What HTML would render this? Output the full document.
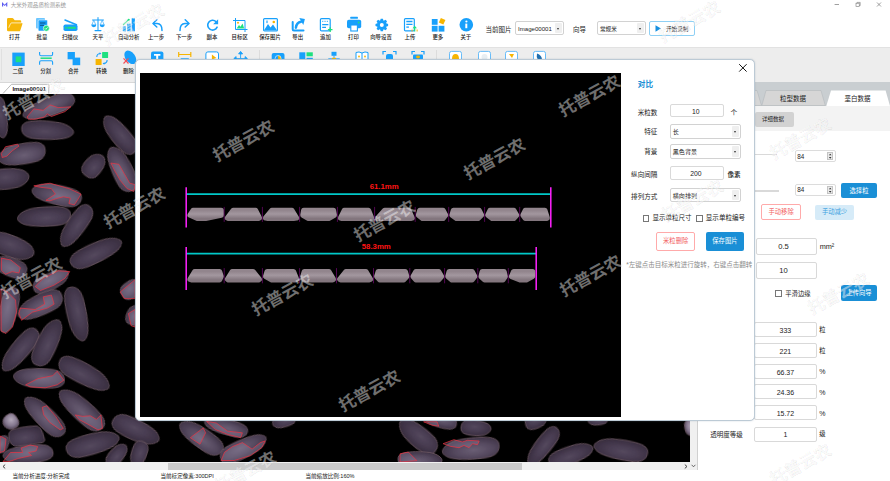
<!DOCTYPE html>
<html lang="zh"><head><meta charset="utf-8"><title>大米外观品质检测系统</title><style>
*{box-sizing:border-box;margin:0;padding:0}
html,body{width:890px;height:481px;overflow:hidden;background:#fff}
body{font-family:"Liberation Sans","Noto Sans CJK SC",sans-serif;color:#222;position:relative;font-size:6.6px;line-height:1}
.abs{position:absolute}
.lbl{position:absolute;white-space:nowrap;transform:translate(-50%,calc(-50% + 1px));font-size:5.4px;color:#222;font-weight:500}
.t{position:absolute;white-space:nowrap;transform:translateY(calc(-50% + 1px))}
.tc{position:absolute;white-space:nowrap;transform:translate(-50%,calc(-50% + 1px))}
.tr{position:absolute;white-space:nowrap;transform:translate(-100%,calc(-50% + 1px))}
.inp{position:absolute;border:1px solid #d9d9d9;border-radius:2px;background:#fff}
.combo{position:absolute;border:1px solid #d2d2d2;border-radius:2px;background:#fff}
.combo i{position:absolute;right:1px;top:1px;bottom:1px;width:7px;background:#efefef;border-radius:1px}
.combo i:after{content:"";position:absolute;left:2px;top:50%;margin-top:-0.5px;border:1.5px solid transparent;border-top:2px solid #333}
.btn{position:absolute;border-radius:2px;display:flex;align-items:center;justify-content:center;white-space:nowrap}
.cb{position:absolute;width:6.500px;height:6.500px;border:.75px solid #777;background:#fff}
.wm{position:absolute;white-space:nowrap;transform:translate(-50%,-50%) rotate(-28.500deg);font-weight:700;font-size:16.700px;line-height:1;color:rgba(255,255,255,.44);-webkit-text-stroke:.3px rgba(60,60,60,.15);text-shadow:.4px .4px 0 rgba(0,0,0,.05)}
svg{position:absolute;overflow:visible}
</style></head><body>
<div class="abs" style="left:0;top:0;width:890px;height:47px;background:#fff"></div>
<svg style="left:2px;top:2.400px" width="5.300" height="4.600" viewBox="0 0 12 10"><path d="M0 10V0l6 6 6-6v10h-2.6V5.6L6 9 2.600 5.600V10z" fill="#5b5bf0"/></svg>
<div class="t" style="left:10.700px;top:5px;font-size:5.550px;color:#9a9a9a">大米外观品质检测系统</div>
<svg style="left:834px;top:1px" width="50" height="8" viewBox="0 0 50 8"><path d="M.600 3.500h4.400" stroke="#777" stroke-width=".7" fill="none"/><rect x="22" y="2.200" width="3.200" height="3.200" fill="none" stroke="#777" stroke-width=".6"/><path d="M23 2.200v-.8h3.200v3.200h-1" fill="none" stroke="#777" stroke-width=".6"/><path d="M43 1.500l4 4m0-4l-4 4" stroke="#777" stroke-width=".7" fill="none"/></svg>
<svg style="left:0;top:0" width="890" height="94" viewBox="0 0 890 94"><g transform="translate(7 18.1)"><path d="M0 1.300Q0 0 1.300 0H5.300Q6 0 6.500.600L7.700 2.200H13Q14.200 2.200 14.200 3.400V4.800H14.800Q15.800 4.800 15.400 5.900L13.300 12.300Q13 13.200 12 13.200H1.300Q0 13.200 0 11.900z" fill="#f6b70a"/><path d="M1.900 9.200L3.500 5.600Q3.900 4.800 4.700 4.800H14.200" stroke="#fff" stroke-width=".7" fill="none" stroke-linecap="round"/></g><g transform="translate(36 18)"><rect x="0" y="0" width="9" height="10.500" rx="1" fill="#6cc6ff"/><rect x="2.200" y="2" width="9.300" height="11" rx="1" fill="#18a0fb" stroke="#fff" stroke-width=".5"/><path d="M4 5h5.500M4 7.300h4" stroke="#0b4f86" stroke-width="1"/><circle cx="10.300" cy="10.300" r="3" fill="#1ee07f" stroke="#fff" stroke-width=".6"/><path d="M8.900 10.300l1 1 1.700-1.900" stroke="#fff" stroke-width=".8" fill="none"/></g><g transform="translate(63.5 19)"><path d="M1.500 1L13 5.800" stroke="#18a0fb" stroke-width="1.500" stroke-linecap="round"/><rect x="0" y="5.500" width="14" height="6.500" rx="1.800" fill="#18a0fb"/><rect x="4" y="7.800" width="8.300" height="2" rx=".6" fill="#1ee07f"/><rect x="1.700" y="7.800" width="1.500" height="2" rx=".5" fill="#1ee07f"/></g><g transform="translate(91 17)"><path d="M7 .6V13M4 13.600H10M1.500 2.900H12.500" stroke="#18a0fb" stroke-width="1.050" stroke-linecap="round" fill="none"/><path d="M2.800 3.200L.8 8H4.800zM11.200 3.200L9.200 8H13.200z" stroke="#18a0fb" stroke-width=".6" fill="none"/><path d="M.3 7.800H5.300Q5.300 10.200 2.800 10.200Q.3 10.200 .3 7.800zM8.700 7.800H13.700Q13.700 10.200 11.200 10.200Q8.700 10.200 8.700 7.800z" fill="#18a0fb"/></g><g transform="translate(123 18.5)"><rect x="-.2" y="7.900" width="3.100" height="4.900" fill="#18a0fb"/><rect x="4.200" y="5.200" width="3.500" height="7.600" fill="#18a0fb"/><rect x="8.700" y="-.2" width="3.200" height="13" fill="#18a0fb"/><path d="M.4 6L5.600 1.400" stroke="#1ee07f" stroke-width="1.200" stroke-linecap="round"/><circle cx="5.700" cy="1.300" r="1.100" fill="#1ee07f"/></g><g transform="translate(152 19)"><path d="M4.800 .8L1 4.500L4.800 8" stroke="#18a0fb" stroke-width="1.500" fill="none" stroke-linecap="round" stroke-linejoin="round"/><path d="M1.500 4.500H5Q10 4.500 10 11.500" stroke="#18a0fb" stroke-width="1.500" fill="none" stroke-linecap="round"/></g><g transform="translate(179 19)"><path d="M6.200 .8L10 4.500L6.200 8" stroke="#18a0fb" stroke-width="1.500" fill="none" stroke-linecap="round" stroke-linejoin="round"/><path d="M9.500 4.500H6Q1 4.500 1 11.500" stroke="#18a0fb" stroke-width="1.500" fill="none" stroke-linecap="round"/></g><g transform="translate(206.8 19)"><path d="M10.300 8.200A4.900 4.900 0 1 1 9.200 2.600" stroke="#18a0fb" stroke-width="1.600" fill="none" stroke-linecap="round"/><path d="M11.300 .2V5.200H6.300z" fill="#18a0fb"/></g><g transform="translate(233 18)"><path d="M2.500 0V11.500H14.500M0 2.500H12V14" stroke="#18a0fb" stroke-width="1" fill="none"/><path d="M3.600 10.500L6 7L7.500 8.700L9.500 5.500L11.200 10.500z" fill="#1ee07f"/><circle cx="5" cy="4.800" r="1" fill="#f7b500"/></g><g transform="translate(263 18)"><rect x=".6" y=".6" width="13.800" height="12.300" rx="1" fill="#fff" stroke="#18a0fb" stroke-width="1.200"/><path d="M1.200 12L5 6L7.500 9.500L10 6.500L13.800 12z" fill="#18a0fb"/><circle cx="10.800" cy="4" r="1.300" fill="#f7b500"/><path d="M4 2.200v3M3 4h2" stroke="#18a0fb" stroke-width=".7"/></g><g transform="translate(291.7 18.5)"><path d="M1 3.500V10.800Q1 12 2.200 12H11.800" stroke="#18a0fb" stroke-width="2" fill="none" stroke-linecap="round"/><path d="M4.200 9.200Q4.800 4 9.300 3.300" stroke="#18a0fb" stroke-width="2.500" fill="none" stroke-linecap="round"/><path d="M7.600 -.4L13.200 .5L11.600 6.500z" fill="#18a0fb"/></g><g transform="translate(319.8 18)"><rect x=".6" y=".6" width="9.800" height="12.300" rx="1.200" fill="#fff" stroke="#18a0fb" stroke-width="1.200"/><path d="M2.400 3.300h1.100M4.700 3.300h1.100M7 3.300h1.100" stroke="#18a0fb" stroke-width="1"/><path d="M2.400 6.500h6.200M2.400 9.300h3.800" stroke="#18a0fb" stroke-width="1.250"/><path d="M10.400 9.300v4.600M8.100 11.600h4.600" stroke="#1ee07f" stroke-width="1.300"/></g><g transform="translate(347 16.7)"><rect x="3.300" y="0" width="7.600" height="2" rx=".5" fill="#18a0fb"/><rect x="0" y="3" width="14.200" height="8.500" rx="1.800" fill="#18a0fb"/><rect x="3.800" y="8.300" width="6.600" height="6" fill="#fff" stroke="#18a0fb" stroke-width="1.100"/><circle cx="11.700" cy="5.800" r=".9" fill="#1ee07f"/></g><g transform="translate(375.6 18.5)"><path d="M12.51 5.42L12.51 7.58L10.60 8.16L10.48 8.44L11.43 10.19L9.89 11.73L8.14 10.78L7.86 10.90L7.28 12.81L5.12 12.81L4.54 10.90L4.26 10.78L2.51 11.73L0.97 10.19L1.92 8.44L1.80 8.16L-0.11 7.58L-0.11 5.42L1.80 4.84L1.92 4.56L0.97 2.81L2.51 1.27L4.26 2.22L4.54 2.10L5.12 0.19L7.28 0.19L7.86 2.10L8.14 2.22L9.89 1.27L11.43 2.81L10.48 4.56L10.60 4.84z" fill="#18a0fb"/><circle cx="6.200" cy="6.500" r="2" fill="#fff"/></g><g transform="translate(403.9 18)"><rect x=".6" y=".6" width="9.800" height="12.300" rx="1" fill="#fff" stroke="#18a0fb" stroke-width="1.200"/><path d="M2.400 3.500h6.200M2.400 6.300h6.200" stroke="#18a0fb" stroke-width="1.300"/><path d="M2.400 9.100h2.600" stroke="#18a0fb" stroke-width="1.300"/><path d="M10.800 13.500V9" stroke="#1ee07f" stroke-width="1.200"/><path d="M8.600 10.300L10.800 7.800L13 10.300z" fill="#1ee07f"/><path d="M8.200 13.500V11.500" stroke="#f7b500" stroke-width="1"/><path d="M13.200 13.500V11.500" stroke="#f7b500" stroke-width="1"/></g><g transform="translate(431.8 18)"><rect x="0" y="1" width="5.800" height="5.800" fill="#18a0fb"/><rect x="0" y="7.800" width="5.800" height="5.800" fill="#18a0fb"/><rect x="6.800" y="7.800" width="5.800" height="5.800" fill="#18a0fb"/><rect x="7.800" y=".8" width="5" height="5" fill="#f7b500" transform="rotate(25 10.300 3.300)"/></g><g transform="translate(459.5 17.9)"><circle cx="6.800" cy="6.900" r="6.800" fill="#18a0fb"/><circle cx="6.900" cy="3.600" r="1.100" fill="#fff"/><path d="M5.800 5.700H7.800V10.300H5.800z" fill="#fff"/></g></svg>
<div class="lbl" style="left:14.5px;top:37.300px">打开</div>
<div class="lbl" style="left:42.0px;top:37.300px">批量</div>
<div class="lbl" style="left:70.0px;top:37.300px">扫描仪</div>
<div class="lbl" style="left:98.0px;top:37.300px">天平</div>
<div class="lbl" style="left:128.7px;top:37.300px">自动分析</div>
<div class="lbl" style="left:156.0px;top:37.300px">上一步</div>
<div class="lbl" style="left:184.0px;top:37.300px">下一步</div>
<div class="lbl" style="left:212.0px;top:37.300px">副本</div>
<div class="lbl" style="left:239.7px;top:37.300px">目标区</div>
<div class="lbl" style="left:270.0px;top:37.300px">保存图片</div>
<div class="lbl" style="left:297.7px;top:37.300px">导出</div>
<div class="lbl" style="left:325.4px;top:37.300px">追加</div>
<div class="lbl" style="left:353.5px;top:37.300px">打印</div>
<div class="lbl" style="left:381.0px;top:37.300px">向导设置</div>
<div class="lbl" style="left:410.0px;top:37.300px">上传</div>
<div class="lbl" style="left:437.8px;top:37.300px">更多</div>
<div class="lbl" style="left:465.8px;top:37.300px">关于</div>
<div class="t" style="left:485.500px;top:28.800px;font-size:6.500px">当前图片</div>
<div class="combo" style="left:515px;top:21.300px;width:49px;height:14.200px"><i></i></div>
<div class="t" style="left:518px;top:27.800px;font-size:6.100px">Image00001</div>
<div class="t" style="left:573px;top:28.800px;font-size:6.500px">向导</div>
<div class="combo" style="left:597px;top:21.300px;width:48.500px;height:14.200px"><i></i></div>
<div class="t" style="left:600px;top:28.600px;font-size:5.600px">常规米</div>
<div class="btn" style="left:649.300px;top:21.200px;width:45.500px;height:14.600px;border:1px solid #8fd0f5;background:#fff"></div>
<svg style="left:655px;top:25px" width="7" height="7" viewBox="0 0 7 7"><path d="M.5.300L6 3.500.5 6.700z" fill="#1890e0"/></svg>
<div class="t" style="left:666px;top:28.600px;font-size:5.600px">开始录制</div>
<div class="abs" style="left:0;top:47px;width:890px;height:34.700px;background:#ededed"></div>
<div class="abs" style="left:0;top:46.500px;width:890px;height:1px;background:#e2e2e2"></div>
<div class="abs" style="left:1px;top:49px;width:1px;height:31px;background:#e0e0e0"></div>
<svg style="left:0;top:0" width="890" height="94" viewBox="0 0 890 94"><g transform="translate(12.3 52.6)"><rect width="12.400" height="13.400" fill="#18a0fb"/><rect x="3.400" y="3.800" width="5.600" height="5.800" fill="#1ee07f"/></g><g transform="translate(39 52)"><path d="M.6 0V2.200Q.6 3.700 2 3.700H12.200Q13.600 3.700 13.600 2.200V0M.6 12.800V10.200Q.6 8.700 2 8.700H12.200Q13.600 8.700 13.600 10.200V12.800" stroke="#18a0fb" stroke-width="1.100" fill="none"/><path d="M1.500 6.200H12.700" stroke="#1ee07f" stroke-width="1.500"/></g><g transform="translate(67.6 52)"><rect x="0" y="0" width="7.300" height="7.300" fill="#18a0fb"/><rect x="5" y="5.600" width="7.600" height="7.600" fill="#18a0fb"/></g><g transform="translate(95.6 52)"><rect x="6.500" y="0" width="6" height="6" rx=".6" fill="#1ee07f"/><rect x="0" y="7" width="6" height="6" rx=".6" fill="#f7b500"/><path d="M1.200 5Q1.200 1.800 4.500 1.500" stroke="#18a0fb" stroke-width="1.100" fill="none"/><path d="M11.500 8Q11.500 11.200 8.200 11.500" stroke="#18a0fb" stroke-width="1.100" fill="none"/><path d="M4 .3L5.800 1.500L4 2.800zM8.800 10.200L7 11.500L8.800 12.800z" fill="#18a0fb"/></g><g transform="translate(122.7 51)"><ellipse cx="7.600" cy="6.300" rx="4.900" ry="7.600" transform="rotate(-36 7.600 6.300)" fill="#18a0fb"/><path d="M.8 7.300L5.800 12.500M5.800 7.300L.8 12.500" stroke="#f2505a" stroke-width="1.200"/></g><g transform="translate(151 51.4)"><rect x="0" y="0" width="12.400" height="12" rx="2" fill="#18a0fb"/><path d="M3 2.500H9.400V4.300H7.200V9.500H5.200V4.300H3z" fill="#fff"/></g><g transform="translate(178.2 52)"><path d="M.5 0V5M12.600 0V5M.5 2.500H12.600" stroke="#f7b500" stroke-width="1.200" fill="none"/><path d="M2.500 7H10.600" stroke="#18a0fb" stroke-width="1.500"/></g><g transform="translate(205.4 51.4)"><rect x=".5" y=".5" width="12.600" height="12" rx="2" fill="#fff" stroke="#18a0fb" stroke-width="1"/><path d="M6.500 3L11 6.500L6.500 8z" fill="#f7b500"/></g><g transform="translate(233.8 51.4)"><path d="M6.800 0L4.800 2.500H8.800zM6.800 2V7M0 7.200L2.300 5.200V9.200zM13.600 7.200L11.300 5.200V9.200zM2 7.200H11.600" fill="#18a0fb" stroke="#18a0fb" stroke-width=".9"/></g><g transform="translate(271.7 53)"><rect x="0" y="0" width="12.800" height="11" rx="2" fill="#18a0fb"/><path d="M6.400 2.500A3 3 0 0 1 6.400 8.500z" fill="#f7b500"/><circle cx="6.400" cy="5.500" r="3" fill="none" stroke="#fff" stroke-width=".6"/></g><g transform="translate(299.3 52.3)"><rect x="0" y="0" width="6" height="12" fill="#18a0fb"/><rect x="7.200" y="0" width="6.300" height="4" fill="#1ee07f"/><rect x="7.200" y="5.500" width="6.300" height="6" fill="#18a0fb"/></g><g transform="translate(328.5 51.8)"><rect x="3" y="0" width="5" height="4" fill="#18a0fb"/><path d="M5.500 4V7M0 9V7H11V9" stroke="#18a0fb" stroke-width=".9" fill="none"/><rect x="3.500" y="6" width="4" height="2" fill="#f7b500"/></g><g transform="translate(355.5 51.5)"><path d="M6.500 1.500Q3.500 -.3 .5 1V11Q3.500 10 6.500 11.500Q9.500 10 12.500 11V1Q9.500 -.3 6.500 1.500zM6.500 1.500V11.500" fill="#fff" stroke="#18a0fb" stroke-width="1"/><circle cx="3.500" cy="5" r=".9" fill="#f7b500"/><circle cx="9.500" cy="5" r=".9" fill="#f7b500"/></g><g transform="translate(383 51.5)"><path d="M0 3V0H3M10 0H13V3M0 9V12M13 9V12" stroke="#18a0fb" stroke-width="1.200" fill="none"/><rect x="3" y="2.500" width="7" height="7" rx="2" fill="#18a0fb"/></g><g transform="translate(412 51.5)"><path d="M0 3V0H3M9 0H12V3" stroke="#18a0fb" stroke-width="1.200" fill="none"/><rect x="1" y="3" width="10" height="5" rx="1" fill="#18a0fb"/><ellipse cx="6" cy="5.500" rx="2" ry="1.400" fill="#f7b500"/></g><g transform="translate(449 50.9)"><rect x=".5" y=".5" width="12" height="12" rx="2" fill="#fff" stroke="#58b6f8" stroke-width=".9"/><g fill="#18a0fb"/><path d="M3 8Q3 3 6.500 3Q10 3 10 8z" fill="#f7b500"/></g><g transform="translate(478 50.9)"><rect x=".5" y=".5" width="12" height="12" rx="2" fill="#fff" stroke="#58b6f8" stroke-width=".9"/><g fill="#18a0fb"/><circle cx="6.500" cy="6" r="3" fill="#e8eef2"/></g><g transform="translate(505 50.9)"><rect x=".5" y=".5" width="12" height="12" rx="2" fill="#fff" stroke="#58b6f8" stroke-width=".9"/><g fill="#18a0fb"/><path d="M4 3H9L7 7z" fill="#f7b500"/></g><g transform="translate(533 50.9)"><rect x=".5" y=".5" width="12" height="12" rx="2" fill="#fff" stroke="#58b6f8" stroke-width=".9"/><g fill="#18a0fb"/><path d="M4 2.500Q9 4 9 9H5Q3 6 4 2.500z" fill="#1f6fb0"/></g></svg>
<div class="lbl" style="left:17.8px;top:71px">二值</div>
<div class="lbl" style="left:45.6px;top:71px">分割</div>
<div class="lbl" style="left:73.3px;top:71px">合并</div>
<div class="lbl" style="left:101.5px;top:71px">转换</div>
<div class="lbl" style="left:128.5px;top:71px">删除</div>
<div class="abs" style="left:258.500px;top:50px;width:1px;height:30px;background:#dcdcdc"></div>
<div class="abs" style="left:435.500px;top:50px;width:1px;height:30px;background:#dcdcdc"></div>
<div class="abs" style="left:0;top:81.700px;width:697px;height:12.300px;background:#fff;border-top:1px solid #d8d8d8"></div>
<svg style="left:0;top:82px" width="60" height="12" viewBox="0 0 60 12"><path d="M3 11.500L11.500 2.300H48.800V11.500" fill="#fff" stroke="#9a9a9a" stroke-width=".7"/></svg>
<div class="t" style="left:12.400px;top:88.700px;font-size:5.950px;font-weight:bold;color:#111">Image00001</div>
<div class="abs" style="left:0;top:94px;width:690px;height:368px;background:#000;overflow:hidden"><svg style="left:0;top:0" width="690" height="368" viewBox="0 94 690 368"><defs><radialGradient id="gd" cx=".45" cy=".42" r=".6"><stop offset="0" stop-color="#54485d"/><stop offset=".5" stop-color="#473b50"/><stop offset=".85" stop-color="#3c3143"/><stop offset="1" stop-color="#352a3b"/></radialGradient><radialGradient id="gg" cx=".45" cy=".42" r=".6"><stop offset="0" stop-color="#6a5e74"/><stop offset=".5" stop-color="#574b61"/><stop offset=".85" stop-color="#45394d"/><stop offset="1" stop-color="#3a2f40"/></radialGradient><radialGradient id="gl" cx=".4" cy=".4" r=".65"><stop offset="0" stop-color="#b4a9ba"/><stop offset=".6" stop-color="#85788f"/><stop offset="1" stop-color="#4d4154"/></radialGradient><filter id="bl" x="-10%" y="-10%" width="120%" height="120%"><feGaussianBlur stdDeviation=".45"/></filter></defs><g transform="translate(0 117) rotate(82) scale(1 1)"><path d="M-21.00 1.05C-21.00 -3.15 -18.48 -5.95 -11.55 -6.72C-2.10 -7.42 9.45 -6.86 15.75 -4.90C18.90 -3.64 21.00 -2.10 21.00 -0.35C21.00 2.10 16.80 5.25 9.45 6.51C0.00 7.70 -9.45 7.42 -15.12 6.30C-19.32 5.25 -21.00 3.50 -21.00 1.05z" fill="url(#gd)" stroke="#705b66" stroke-width=".8" filter="url(#bl)"/></g><g transform="translate(48.6 106.8) rotate(-20) scale(-1 1)"><path d="M-27.00 1.27C-27.00 -3.83 -23.76 -7.22 -14.85 -8.16C-2.70 -9.01 12.15 -8.33 20.25 -5.95C24.30 -4.42 27.00 -2.55 27.00 -0.43C27.00 2.55 21.60 6.38 12.15 7.91C0.00 9.35 -12.15 9.01 -19.44 7.65C-24.84 6.38 -27.00 4.25 -27.00 1.27z" fill="url(#gg)" stroke="#705b66" stroke-width=".8" filter="url(#bl)"/></g><g transform="translate(47.6 130.5) rotate(3) scale(1 -1)"><path d="M-26.00 1.35C-26.00 -4.05 -22.88 -7.65 -14.30 -8.64C-2.60 -9.54 11.70 -8.82 19.50 -6.30C23.40 -4.68 26.00 -2.70 26.00 -0.45C26.00 2.70 20.80 6.75 11.70 8.37C0.00 9.90 -11.70 9.54 -18.72 8.10C-23.92 6.75 -26.00 4.50 -26.00 1.35z" fill="url(#gd)" stroke="#705b66" stroke-width=".8" filter="url(#bl)"/></g><g transform="translate(21.6 154.3) rotate(-10) scale(-1 -1)"><path d="M-24.00 1.50C-24.00 -4.50 -21.12 -8.50 -13.20 -9.60C-2.40 -10.60 10.80 -9.80 18.00 -7.00C21.60 -5.20 24.00 -3.00 24.00 -0.50C24.00 3.00 19.20 7.50 10.80 9.30C0.00 11.00 -10.80 10.60 -17.28 9.00C-22.08 7.50 -24.00 5.00 -24.00 1.50z" fill="url(#gg)" stroke="#705b66" stroke-width=".8" filter="url(#bl)"/></g><g transform="translate(8 178.6) rotate(-5) scale(1 1)"><path d="M-21.00 1.50C-21.00 -4.50 -18.48 -8.50 -11.55 -9.60C-2.10 -10.60 9.45 -9.80 15.75 -7.00C18.90 -5.20 21.00 -3.00 21.00 -0.50C21.00 3.00 16.80 7.50 9.45 9.30C0.00 11.00 -9.45 10.60 -15.12 9.00C-19.32 7.50 -21.00 5.00 -21.00 1.50z" fill="url(#gd)" stroke="#705b66" stroke-width=".8" filter="url(#bl)"/></g><g transform="translate(56.7 194.9) rotate(12) scale(-1 -1)"><path d="M-25.00 1.43C-25.00 -4.28 -22.00 -8.07 -13.75 -9.12C-2.50 -10.07 11.25 -9.31 18.75 -6.65C22.50 -4.94 25.00 -2.85 25.00 -0.48C25.00 2.85 20.00 7.12 11.25 8.84C0.00 10.45 -11.25 10.07 -18.00 8.55C-23.00 7.12 -25.00 4.75 -25.00 1.43z" fill="url(#gg)" stroke="#705b66" stroke-width=".8" filter="url(#bl)"/></g><g transform="translate(94 165.7) rotate(-50) scale(1 -1)"><path d="M-13.00 1.35C-13.00 -4.05 -11.44 -7.65 -7.15 -8.64C-1.30 -9.54 5.85 -8.82 9.75 -6.30C11.70 -4.68 13.00 -2.70 13.00 -0.45C13.00 2.70 10.40 6.75 5.85 8.37C0.00 9.90 -5.85 9.54 -9.36 8.10C-11.96 6.75 -13.00 4.50 -13.00 1.35z" fill="url(#gd)" stroke="#705b66" stroke-width=".8" filter="url(#bl)"/></g><g transform="translate(119.7 134.6) rotate(50) scale(-1 1)"><path d="M-23.00 1.35C-23.00 -4.05 -20.24 -7.65 -12.65 -8.64C-2.30 -9.54 10.35 -8.82 17.25 -6.30C20.70 -4.68 23.00 -2.70 23.00 -0.45C23.00 2.70 18.40 6.75 10.35 8.37C0.00 9.90 -10.35 9.54 -16.56 8.10C-21.16 6.75 -23.00 4.50 -23.00 1.35z" fill="url(#gd)" stroke="#705b66" stroke-width=".8" filter="url(#bl)"/></g><g transform="translate(121.6 169.2) rotate(65) scale(-1 -1)"><path d="M-24.00 1.50C-24.00 -4.50 -21.12 -8.50 -13.20 -9.60C-2.40 -10.60 10.80 -9.80 18.00 -7.00C21.60 -5.20 24.00 -3.00 24.00 -0.50C24.00 3.00 19.20 7.50 10.80 9.30C0.00 11.00 -10.80 10.60 -17.28 9.00C-22.08 7.50 -24.00 5.00 -24.00 1.50z" fill="url(#gg)" stroke="#705b66" stroke-width=".8" filter="url(#bl)"/></g><g transform="translate(44 216.8) rotate(-3) scale(-1 -1)"><path d="M-26.50 1.43C-26.50 -4.28 -23.32 -8.07 -14.58 -9.12C-2.65 -10.07 11.93 -9.31 19.88 -6.65C23.85 -4.94 26.50 -2.85 26.50 -0.48C26.50 2.85 21.20 7.12 11.93 8.84C0.00 10.45 -11.93 10.07 -19.08 8.55C-24.38 7.12 -26.50 4.75 -26.50 1.43z" fill="url(#gd)" stroke="#705b66" stroke-width=".8" filter="url(#bl)"/></g><g transform="translate(76 226) rotate(-55) scale(-1 -1)"><path d="M-24.00 1.35C-24.00 -4.05 -21.12 -7.65 -13.20 -8.64C-2.40 -9.54 10.80 -8.82 18.00 -6.30C21.60 -4.68 24.00 -2.70 24.00 -0.45C24.00 2.70 19.20 6.75 10.80 8.37C0.00 9.90 -10.80 9.54 -17.28 8.10C-22.08 6.75 -24.00 4.50 -24.00 1.35z" fill="url(#gd)" stroke="#705b66" stroke-width=".8" filter="url(#bl)"/></g><g transform="translate(96.2 252.7) rotate(-25) scale(1 -1)"><path d="M-27.50 1.43C-27.50 -4.28 -24.20 -8.07 -15.13 -9.12C-2.75 -10.07 12.38 -9.31 20.62 -6.65C24.75 -4.94 27.50 -2.85 27.50 -0.48C27.50 2.85 22.00 7.12 12.38 8.84C0.00 10.45 -12.38 10.07 -19.80 8.55C-25.30 7.12 -27.50 4.75 -27.50 1.43z" fill="url(#gd)" stroke="#705b66" stroke-width=".8" filter="url(#bl)"/></g><g transform="translate(12 246.5) rotate(20) scale(1 1)"><path d="M-23.00 1.57C-23.00 -4.73 -20.24 -8.92 -12.65 -10.08C-2.30 -11.13 10.35 -10.29 17.25 -7.35C20.70 -5.46 23.00 -3.15 23.00 -0.53C23.00 3.15 18.40 7.88 10.35 9.77C0.00 11.55 -10.35 11.13 -16.56 9.45C-21.16 7.88 -23.00 5.25 -23.00 1.57z" fill="url(#gd)" stroke="#705b66" stroke-width=".8" filter="url(#bl)"/></g><g transform="translate(10 267) rotate(20) scale(-1 -1)"><path d="M-17.00 1.35C-17.00 -4.05 -14.96 -7.65 -9.35 -8.64C-1.70 -9.54 7.65 -8.82 12.75 -6.30C15.30 -4.68 17.00 -2.70 17.00 -0.45C17.00 2.70 13.60 6.75 7.65 8.37C0.00 9.90 -7.65 9.54 -12.24 8.10C-15.64 6.75 -17.00 4.50 -17.00 1.35z" fill="url(#gg)" stroke="#705b66" stroke-width=".8" filter="url(#bl)"/></g><g transform="translate(51 281) rotate(-25) scale(1 1)"><path d="M-19.00 1.20C-19.00 -3.60 -16.72 -6.80 -10.45 -7.68C-1.90 -8.48 8.55 -7.84 14.25 -5.60C17.10 -4.16 19.00 -2.40 19.00 -0.40C19.00 2.40 15.20 6.00 8.55 7.44C0.00 8.80 -8.55 8.48 -13.68 7.20C-17.48 6.00 -19.00 4.00 -19.00 1.20z" fill="url(#gg)" stroke="#705b66" stroke-width=".8" filter="url(#bl)"/></g><g transform="translate(40 305.4) rotate(-25) scale(-1 -1)"><path d="M-24.00 1.50C-24.00 -4.50 -21.12 -8.50 -13.20 -9.60C-2.40 -10.60 10.80 -9.80 18.00 -7.00C21.60 -5.20 24.00 -3.00 24.00 -0.50C24.00 3.00 19.20 7.50 10.80 9.30C0.00 11.00 -10.80 10.60 -17.28 9.00C-22.08 7.50 -24.00 5.00 -24.00 1.50z" fill="url(#gg)" stroke="#705b66" stroke-width=".8" filter="url(#bl)"/></g><g transform="translate(77 314) rotate(78) scale(1 1)"><path d="M-27.50 1.43C-27.50 -4.28 -24.20 -8.07 -15.13 -9.12C-2.75 -10.07 12.38 -9.31 20.62 -6.65C24.75 -4.94 27.50 -2.85 27.50 -0.48C27.50 2.85 22.00 7.12 12.38 8.84C0.00 10.45 -12.38 10.07 -19.80 8.55C-25.30 7.12 -27.50 4.75 -27.50 1.43z" fill="url(#gd)" stroke="#705b66" stroke-width=".8" filter="url(#bl)"/></g><g transform="translate(8.5 310) rotate(-78) scale(-1 1)"><path d="M-23.00 1.27C-23.00 -3.83 -20.24 -7.22 -12.65 -8.16C-2.30 -9.01 10.35 -8.33 17.25 -5.95C20.70 -4.42 23.00 -2.55 23.00 -0.43C23.00 2.55 18.40 6.38 10.35 7.91C0.00 9.35 -10.35 9.01 -16.56 7.65C-21.16 6.38 -23.00 4.25 -23.00 1.27z" fill="url(#gg)" stroke="#705b66" stroke-width=".8" filter="url(#bl)"/></g><g transform="translate(131 289) rotate(-40) scale(1 1)"><path d="M-11.00 1.20C-11.00 -3.60 -9.68 -6.80 -6.05 -7.68C-1.10 -8.48 4.95 -7.84 8.25 -5.60C9.90 -4.16 11.00 -2.40 11.00 -0.40C11.00 2.40 8.80 6.00 4.95 7.44C0.00 8.80 -4.95 8.48 -7.92 7.20C-10.12 6.00 -11.00 4.00 -11.00 1.20z" fill="url(#gg)" stroke="#705b66" stroke-width=".8" filter="url(#bl)"/></g><g transform="translate(134 315) rotate(-70) scale(1 -1)"><path d="M-10.00 1.05C-10.00 -3.15 -8.80 -5.95 -5.50 -6.72C-1.00 -7.42 4.50 -6.86 7.50 -4.90C9.00 -3.64 10.00 -2.10 10.00 -0.35C10.00 2.10 8.00 5.25 4.50 6.51C0.00 7.70 -4.50 7.42 -7.20 6.30C-9.20 5.25 -10.00 3.50 -10.00 1.05z" fill="url(#gg)" stroke="#705b66" stroke-width=".8" filter="url(#bl)"/></g><g transform="translate(20 350) rotate(-50) scale(-1 -1)"><path d="M-26.00 1.35C-26.00 -4.05 -22.88 -7.65 -14.30 -8.64C-2.60 -9.54 11.70 -8.82 19.50 -6.30C23.40 -4.68 26.00 -2.70 26.00 -0.45C26.00 2.70 20.80 6.75 11.70 8.37C0.00 9.90 -11.70 9.54 -18.72 8.10C-23.92 6.75 -26.00 4.50 -26.00 1.35z" fill="url(#gd)" stroke="#705b66" stroke-width=".8" filter="url(#bl)"/></g><g transform="translate(47.6 342.6) rotate(-65) scale(1 -1)"><path d="M-25.00 1.50C-25.00 -4.50 -22.00 -8.50 -13.75 -9.60C-2.50 -10.60 11.25 -9.80 18.75 -7.00C22.50 -5.20 25.00 -3.00 25.00 -0.50C25.00 3.00 20.00 7.50 11.25 9.30C0.00 11.00 -11.25 10.60 -18.00 9.00C-23.00 7.50 -25.00 5.00 -25.00 1.50z" fill="url(#gd)" stroke="#705b66" stroke-width=".8" filter="url(#bl)"/></g><g transform="translate(84.3 374.2) rotate(28) scale(1 -1)"><path d="M-28.00 1.50C-28.00 -4.50 -24.64 -8.50 -15.40 -9.60C-2.80 -10.60 12.60 -9.80 21.00 -7.00C25.20 -5.20 28.00 -3.00 28.00 -0.50C28.00 3.00 22.40 7.50 12.60 9.30C0.00 11.00 -12.60 10.60 -20.16 9.00C-25.76 7.50 -28.00 5.00 -28.00 1.50z" fill="url(#gd)" stroke="#705b66" stroke-width=".8" filter="url(#bl)"/></g><g transform="translate(39 378) rotate(3) scale(-1 1)"><path d="M-25.50 1.43C-25.50 -4.28 -22.44 -8.07 -14.03 -9.12C-2.55 -10.07 11.47 -9.31 19.12 -6.65C22.95 -4.94 25.50 -2.85 25.50 -0.48C25.50 2.85 20.40 7.12 11.47 8.84C0.00 10.45 -11.47 10.07 -18.36 8.55C-23.46 7.12 -25.50 4.75 -25.50 1.43z" fill="url(#gg)" stroke="#705b66" stroke-width=".8" filter="url(#bl)"/></g><g transform="translate(81.3 409.8) rotate(42) scale(-1 -1)"><path d="M-28.00 1.50C-28.00 -4.50 -24.64 -8.50 -15.40 -9.60C-2.80 -10.60 12.60 -9.80 21.00 -7.00C25.20 -5.20 28.00 -3.00 28.00 -0.50C28.00 3.00 22.40 7.50 12.60 9.30C0.00 11.00 -12.60 10.60 -20.16 9.00C-25.76 7.50 -28.00 5.00 -28.00 1.50z" fill="url(#gg)" stroke="#705b66" stroke-width=".8" filter="url(#bl)"/></g><g transform="translate(44.3 416.4) rotate(45) scale(-1 -1)"><path d="M-26.00 1.43C-26.00 -4.28 -22.88 -8.07 -14.30 -9.12C-2.60 -10.07 11.70 -9.31 19.50 -6.65C23.40 -4.94 26.00 -2.85 26.00 -0.48C26.00 2.85 20.80 7.12 11.70 8.84C0.00 10.45 -11.70 10.07 -18.72 8.55C-23.92 7.12 -26.00 4.75 -26.00 1.43z" fill="url(#gg)" stroke="#705b66" stroke-width=".8" filter="url(#bl)"/></g><g transform="translate(92.8 444) rotate(-15) scale(1 -1)"><path d="M-27.00 1.50C-27.00 -4.50 -23.76 -8.50 -14.85 -9.60C-2.70 -10.60 12.15 -9.80 20.25 -7.00C24.30 -5.20 27.00 -3.00 27.00 -0.50C27.00 3.00 21.60 7.50 12.15 9.30C0.00 11.00 -12.15 10.60 -19.44 9.00C-24.84 7.50 -27.00 5.00 -27.00 1.50z" fill="url(#gd)" stroke="#705b66" stroke-width=".8" filter="url(#bl)"/></g><g transform="translate(136 430) rotate(25) scale(1 1)"><path d="M-25.00 1.50C-25.00 -4.50 -22.00 -8.50 -13.75 -9.60C-2.50 -10.60 11.25 -9.80 18.75 -7.00C22.50 -5.20 25.00 -3.00 25.00 -0.50C25.00 3.00 20.00 7.50 11.25 9.30C0.00 11.00 -11.25 10.60 -18.00 9.00C-23.00 7.50 -25.00 5.00 -25.00 1.50z" fill="url(#gd)" stroke="#705b66" stroke-width=".8" filter="url(#bl)"/></g><g transform="translate(10.5 421.7) rotate(-30) scale(-1 1)"><path d="M-7.50 1.12C-7.50 -3.38 -6.60 -6.38 -4.12 -7.20C-0.75 -7.95 3.38 -7.35 5.62 -5.25C6.75 -3.90 7.50 -2.25 7.50 -0.38C7.50 2.25 6.00 5.62 3.38 6.98C0.00 8.25 -3.38 7.95 -5.40 6.75C-6.90 5.62 -7.50 3.75 -7.50 1.12z" fill="url(#gl)" stroke="#705b66" stroke-width=".8" filter="url(#bl)"/></g><g transform="translate(26.8 436) rotate(-8) scale(1 -1)"><path d="M-18.00 0.90C-18.00 -6.30 -14.40 -9.00 -8.10 -9.00C0.00 -9.18 9.00 -9.00 14.40 -8.55C16.20 -8.10 18.00 -7.20 17.10 -5.40C16.20 1.80 15.30 7.20 10.80 8.73C0.00 9.54 -9.00 9.45 -13.50 8.10C-17.10 6.75 -18.00 4.50 -18.00 0.90z" fill="url(#gd)" stroke="#705b66" stroke-width=".8" filter="url(#bl)"/></g><g transform="translate(28 454) rotate(-5) scale(-1 1)"><path d="M-25.00 1.27C-25.00 -3.83 -22.00 -7.22 -13.75 -8.16C-2.50 -9.01 11.25 -8.33 18.75 -5.95C22.50 -4.42 25.00 -2.55 25.00 -0.43C25.00 2.55 20.00 6.38 11.25 7.91C0.00 9.35 -11.25 9.01 -18.00 7.65C-23.00 6.38 -25.00 4.25 -25.00 1.27z" fill="url(#gg)" stroke="#705b66" stroke-width=".8" filter="url(#bl)"/></g><g transform="translate(2 444) rotate(-60) scale(1 1)"><path d="M-9.00 0.90C-9.00 -2.70 -7.92 -5.10 -4.95 -5.76C-0.90 -6.36 4.05 -5.88 6.75 -4.20C8.10 -3.12 9.00 -1.80 9.00 -0.30C9.00 1.80 7.20 4.50 4.05 5.58C0.00 6.60 -4.05 6.36 -6.48 5.40C-8.28 4.50 -9.00 3.00 -9.00 0.90z" fill="url(#gg)" stroke="#705b66" stroke-width=".8" filter="url(#bl)"/></g><g transform="translate(117 455) rotate(-50) scale(1 -1)"><path d="M-13.00 1.05C-13.00 -3.15 -11.44 -5.95 -7.15 -6.72C-1.30 -7.42 5.85 -6.86 9.75 -4.90C11.70 -3.64 13.00 -2.10 13.00 -0.35C13.00 2.10 10.40 5.25 5.85 6.51C0.00 7.70 -5.85 7.42 -9.36 6.30C-11.96 5.25 -13.00 3.50 -13.00 1.05z" fill="url(#gd)" stroke="#705b66" stroke-width=".8" filter="url(#bl)"/></g><g transform="translate(139 454) rotate(-72) scale(-1 -1)"><path d="M-13.00 1.12C-13.00 -3.38 -11.44 -6.38 -7.15 -7.20C-1.30 -7.95 5.85 -7.35 9.75 -5.25C11.70 -3.90 13.00 -2.25 13.00 -0.38C13.00 2.25 10.40 5.62 5.85 6.98C0.00 8.25 -5.85 7.95 -9.36 6.75C-11.96 5.62 -13.00 3.75 -13.00 1.12z" fill="url(#gd)" stroke="#705b66" stroke-width=".8" filter="url(#bl)"/></g><g transform="translate(201 437.7) rotate(35) scale(-1 -1)"><path d="M-25.00 1.43C-25.00 -4.28 -22.00 -8.07 -13.75 -9.12C-2.50 -10.07 11.25 -9.31 18.75 -6.65C22.50 -4.94 25.00 -2.85 25.00 -0.48C25.00 2.85 20.00 7.12 11.25 8.84C0.00 10.45 -11.25 10.07 -18.00 8.55C-23.00 7.12 -25.00 4.75 -25.00 1.43z" fill="url(#gg)" stroke="#705b66" stroke-width=".8" filter="url(#bl)"/></g><g transform="translate(226 427) rotate(15) scale(-1 -1)"><path d="M-22.00 1.12C-22.00 -3.38 -19.36 -6.38 -12.10 -7.20C-2.20 -7.95 9.90 -7.35 16.50 -5.25C19.80 -3.90 22.00 -2.25 22.00 -0.38C22.00 2.25 17.60 5.62 9.90 6.98C0.00 8.25 -9.90 7.95 -15.84 6.75C-20.24 5.62 -22.00 3.75 -22.00 1.12z" fill="url(#gg)" stroke="#705b66" stroke-width=".8" filter="url(#bl)"/></g><g transform="translate(243.4 448.4) rotate(-25) scale(1 1)"><path d="M-25.00 1.35C-25.00 -4.05 -22.00 -7.65 -13.75 -8.64C-2.50 -9.54 11.25 -8.82 18.75 -6.30C22.50 -4.68 25.00 -2.70 25.00 -0.45C25.00 2.70 20.00 6.75 11.25 8.37C0.00 9.90 -11.25 9.54 -18.00 8.10C-23.00 6.75 -25.00 4.50 -25.00 1.35z" fill="url(#gg)" stroke="#705b66" stroke-width=".8" filter="url(#bl)"/></g><g transform="translate(284 420) rotate(-20) scale(-1 -1)"><path d="M-12.00 1.05C-12.00 -3.15 -10.56 -5.95 -6.60 -6.72C-1.20 -7.42 5.40 -6.86 9.00 -4.90C10.80 -3.64 12.00 -2.10 12.00 -0.35C12.00 2.10 9.60 5.25 5.40 6.51C0.00 7.70 -5.40 7.42 -8.64 6.30C-11.04 5.25 -12.00 3.50 -12.00 1.05z" fill="url(#gd)" stroke="#705b66" stroke-width=".8" filter="url(#bl)"/></g><g transform="translate(418 436) rotate(40) scale(-1 1)"><path d="M-23.00 1.50C-23.00 -4.50 -20.24 -8.50 -12.65 -9.60C-2.30 -10.60 10.35 -9.80 17.25 -7.00C20.70 -5.20 23.00 -3.00 23.00 -0.50C23.00 3.00 18.40 7.50 10.35 9.30C0.00 11.00 -10.35 10.60 -16.56 9.00C-21.16 7.50 -23.00 5.00 -23.00 1.50z" fill="url(#gd)" stroke="#705b66" stroke-width=".8" filter="url(#bl)"/></g><g transform="translate(420 460) rotate(0) scale(1 -1)"><path d="M-22.00 1.20C-22.00 -3.60 -19.36 -6.80 -12.10 -7.68C-2.20 -8.48 9.90 -7.84 16.50 -5.60C19.80 -4.16 22.00 -2.40 22.00 -0.40C22.00 2.40 17.60 6.00 9.90 7.44C0.00 8.80 -9.90 8.48 -15.84 7.20C-20.24 6.00 -22.00 4.00 -22.00 1.20z" fill="url(#gg)" stroke="#705b66" stroke-width=".8" filter="url(#bl)"/></g><g transform="translate(440 420) rotate(15) scale(-1 1)"><path d="M-17.00 1.05C-17.00 -3.15 -14.96 -5.95 -9.35 -6.72C-1.70 -7.42 7.65 -6.86 12.75 -4.90C15.30 -3.64 17.00 -2.10 17.00 -0.35C17.00 2.10 13.60 5.25 7.65 6.51C0.00 7.70 -7.65 7.42 -12.24 6.30C-15.64 5.25 -17.00 3.50 -17.00 1.05z" fill="url(#gg)" stroke="#705b66" stroke-width=".8" filter="url(#bl)"/></g><g transform="translate(476 428) rotate(5) scale(1 1)"><path d="M-15.00 1.12C-15.00 -3.38 -13.20 -6.38 -8.25 -7.20C-1.50 -7.95 6.75 -7.35 11.25 -5.25C13.50 -3.90 15.00 -2.25 15.00 -0.38C15.00 2.25 12.00 5.62 6.75 6.98C0.00 8.25 -6.75 7.95 -10.80 6.75C-13.80 5.62 -15.00 3.75 -15.00 1.12z" fill="url(#gd)" stroke="#705b66" stroke-width=".8" filter="url(#bl)"/></g><g transform="translate(470.8 448.8) rotate(-5) scale(-1 -1)"><path d="M-28.50 1.57C-28.50 -4.73 -25.08 -8.92 -15.68 -10.08C-2.85 -11.13 12.83 -10.29 21.38 -7.35C25.65 -5.46 28.50 -3.15 28.50 -0.53C28.50 3.15 22.80 7.88 12.83 9.77C0.00 11.55 -12.83 11.13 -20.52 9.45C-26.22 7.88 -28.50 5.25 -28.50 1.57z" fill="url(#gg)" stroke="#705b66" stroke-width=".8" filter="url(#bl)"/></g><g transform="translate(536 421) rotate(-20) scale(1 1)"><path d="M-11.00 1.05C-11.00 -3.15 -9.68 -5.95 -6.05 -6.72C-1.10 -7.42 4.95 -6.86 8.25 -4.90C9.90 -3.64 11.00 -2.10 11.00 -0.35C11.00 2.10 8.80 5.25 4.95 6.51C0.00 7.70 -4.95 7.42 -7.92 6.30C-10.12 5.25 -11.00 3.50 -11.00 1.05z" fill="url(#gd)" stroke="#705b66" stroke-width=".8" filter="url(#bl)"/></g><g transform="translate(543 446.4) rotate(-52) scale(-1 -1)"><path d="M-23.00 1.20C-23.00 -3.60 -20.24 -6.80 -12.65 -7.68C-2.30 -8.48 10.35 -7.84 17.25 -5.60C20.70 -4.16 23.00 -2.40 23.00 -0.40C23.00 2.40 18.40 6.00 10.35 7.44C0.00 8.80 -10.35 8.48 -16.56 7.20C-21.16 6.00 -23.00 4.00 -23.00 1.20z" fill="url(#gd)" stroke="#705b66" stroke-width=".8" filter="url(#bl)"/></g><g transform="translate(571 455) rotate(-20) scale(1 -1)"><path d="M-23.00 1.27C-23.00 -3.83 -20.24 -7.22 -12.65 -8.16C-2.30 -9.01 10.35 -8.33 17.25 -5.95C20.70 -4.42 23.00 -2.55 23.00 -0.43C23.00 2.55 18.40 6.38 10.35 7.91C0.00 9.35 -10.35 9.01 -16.56 7.65C-21.16 6.38 -23.00 4.25 -23.00 1.27z" fill="url(#gd)" stroke="#705b66" stroke-width=".8" filter="url(#bl)"/></g><g transform="translate(620.8 449.8) rotate(10) scale(-1 -1)"><path d="M-27.00 1.46C-27.00 -4.39 -23.76 -8.29 -14.85 -9.36C-2.70 -10.34 12.15 -9.55 20.25 -6.82C24.30 -5.07 27.00 -2.92 27.00 -0.49C27.00 2.92 21.60 7.31 12.15 9.07C0.00 10.73 -12.15 10.34 -19.44 8.78C-24.84 7.31 -27.00 4.88 -27.00 1.46z" fill="url(#gd)" stroke="#705b66" stroke-width=".8" filter="url(#bl)"/></g><g transform="translate(598 419) rotate(-10) scale(-1 -1)"><path d="M-10.00 0.90C-10.00 -2.70 -8.80 -5.10 -5.50 -5.76C-1.00 -6.36 4.50 -5.88 7.50 -4.20C9.00 -3.12 10.00 -1.80 10.00 -0.30C10.00 1.80 8.00 4.50 4.50 5.58C0.00 6.60 -4.50 6.36 -7.20 5.40C-9.20 4.50 -10.00 3.00 -10.00 0.90z" fill="url(#gd)" stroke="#705b66" stroke-width=".8" filter="url(#bl)"/></g><g transform="translate(690.5 428) rotate(80) scale(1 1)"><path d="M-8.00 0.82C-8.00 -2.48 -7.04 -4.67 -4.40 -5.28C-0.80 -5.83 3.60 -5.39 6.00 -3.85C7.20 -2.86 8.00 -1.65 8.00 -0.28C8.00 1.65 6.40 4.12 3.60 5.12C0.00 6.05 -3.60 5.83 -5.76 4.95C-7.36 4.12 -8.00 2.75 -8.00 0.82z" fill="url(#gl)" stroke="#705b66" stroke-width=".8" filter="url(#bl)"/></g><path d="M27.0 117.0L33.8 108.9L43.2 110.3L50.0 104.9L58.1 107.6L70.8 106.8L64.9 111.6L51.4 116.5L47.3 113.8L44.6 117.0L35.1 119.2L28.4 119.2z" fill="rgba(160,150,180,.28)" stroke="#ee3242" stroke-width=".7" stroke-linejoin="round"/><path d="M1.4 153.5L5.4 146.8L17.6 144.1L18.9 146.2L12.2 150.8L6.8 156.2L2.2 157.6z" fill="rgba(160,150,180,.28)" stroke="#ee3242" stroke-width=".7" stroke-linejoin="round"/><path d="M33.8 185.9L50.0 183.2L68.9 188.6L81.1 194.1L77.0 200.8L74.3 204.9L68.9 203.5L70.3 198.1L63.5 196.8L58.1 198.1L50.0 200.8L45.9 200.3L55.4 194.1L51.4 188.6L40.5 187.3z" fill="rgba(160,150,180,.28)" stroke="#ee3242" stroke-width=".7" stroke-linejoin="round"/><path d="M110.8 163.0L118.9 164.3L124.3 173.8L129.7 183.2L135.1 184.6L133.8 191.4L127.0 188.6L120.3 180.5L114.9 171.1z" fill="rgba(160,150,180,.28)" stroke="#ee3242" stroke-width=".7" stroke-linejoin="round"/><path d="M1.4 258.1L10.8 260.0L20.3 267.6L18.9 273.0L12.2 271.6L5.4 274.3L1.4 270.3z" fill="rgba(160,150,180,.28)" stroke="#ee3242" stroke-width=".7" stroke-linejoin="round"/><path d="M35.1 286.5L43.2 278.4L58.1 270.8L69.7 271.6L64.9 278.4L54.1 285.1L40.5 290.5z" fill="rgba(160,150,180,.28)" stroke="#ee3242" stroke-width=".7" stroke-linejoin="round"/><path d="M20.3 308.1L35.1 309.5L44.6 304.1L43.2 296.8L51.4 295.1L54.1 304.1L47.3 308.1L32.4 312.2L21.6 320.3L18.9 313.5z" fill="rgba(160,150,180,.28)" stroke="#ee3242" stroke-width=".7" stroke-linejoin="round"/><path d="M0.8 289.0L8.0 292.5L15.5 300.0L16.5 312.0L12.5 327.0L6.0 333.5L1.2 331.0z" fill="rgba(160,150,180,.28)" stroke="#ee3242" stroke-width=".7" stroke-linejoin="round"/><path d="M120.3 291.9L135.1 279.7L135.1 298.6L124.3 298.6z" fill="rgba(160,150,180,.28)" stroke="#ee3242" stroke-width=".7" stroke-linejoin="round"/><path d="M128.4 313.5L135.1 309.5L135.1 327.0L131.1 325.7z" fill="rgba(160,150,180,.28)" stroke="#ee3242" stroke-width=".7" stroke-linejoin="round"/><path d="M25.6 384.8L37.7 378.7L52.7 375.7L57.2 371.2L63.9 380.2L57.2 384.8L45.2 387.8L30.1 386.9z" fill="rgba(160,150,180,.28)" stroke="#ee3242" stroke-width=".7" stroke-linejoin="round"/><path d="M42.2 407.3L46.7 405.8L55.7 416.4L63.3 428.4L60.2 429.9L49.7 422.4L43.7 414.9z" fill="rgba(160,150,180,.28)" stroke="#ee3242" stroke-width=".7" stroke-linejoin="round"/><path d="M75.3 414.9L82.8 416.4L90.4 415.8L96.4 419.4L100.9 414.9L102.4 428.4L97.9 429.9L87.3 423.9L78.9 419.4z" fill="rgba(160,150,180,.28)" stroke="#ee3242" stroke-width=".7" stroke-linejoin="round"/><path d="M21.1 448.0L30.1 445.0L37.7 446.5L36.1 451.0L28.6 452.5L31.6 455.5L18.1 458.5L9.0 461.6L3.0 461.6L10.5 452.5L22.6 452.5z" fill="rgba(160,150,180,.28)" stroke="#ee3242" stroke-width=".7" stroke-linejoin="round"/><path d="M0.0 436.0L6.0 439.0L4.5 451.0L0.0 452.5z" fill="rgba(160,150,180,.28)" stroke="#ee3242" stroke-width=".7" stroke-linejoin="round"/><path d="M190.3 437.7L203.3 427.9L205.6 432.8L200.0 444.2z" fill="rgba(160,150,180,.28)" stroke="#ee3242" stroke-width=".7" stroke-linejoin="round"/><path d="M206.5 421.4L216.3 423.0L227.7 431.2L242.4 432.8L240.7 437.7L227.7 434.4L215.3 429.5z" fill="rgba(160,150,180,.28)" stroke="#ee3242" stroke-width=".7" stroke-linejoin="round"/><path d="M221.2 460.5L224.5 452.3L232.6 446.5L242.4 442.6L252.1 449.1L260.3 442.6L265.2 440.9L261.9 447.5L250.5 455.6L234.2 460.5z" fill="rgba(160,150,180,.28)" stroke="#ee3242" stroke-width=".7" stroke-linejoin="round"/><path d="M400.0 453.8L408.4 452.1L416.9 460.6L400.0 462.0z" fill="rgba(160,150,180,.28)" stroke="#ee3242" stroke-width=".7" stroke-linejoin="round"/><path d="M423.6 421.8L437.1 421.8L438.8 426.2L432.0 425.2z" fill="rgba(160,150,180,.28)" stroke="#ee3242" stroke-width=".7" stroke-linejoin="round"/><path d="M443.1 443.7L453.9 439.7L462.4 442.0L467.4 440.3L479.2 441.0L477.5 444.7L472.5 443.7L469.1 447.7L464.0 445.4L459.0 447.7L450.6 446.4z" fill="rgba(160,150,180,.28)" stroke="#ee3242" stroke-width=".7" stroke-linejoin="round"/></svg></div>
<div class="abs" style="left:0;top:462px;width:690px;height:8px;background:#f0f0f0"></div>
<div class="abs" style="left:168px;top:462.500px;width:354px;height:7px;background:#cbcbcb"></div>
<div class="abs" style="left:690px;top:94px;width:7px;height:376px;background:#f0f0f0"></div>
<svg style="left:1.800px;top:463.800px" width="4" height="5" viewBox="0 0 4 5"><path d="M3.200.600L1 2.500 3.200 4.400" stroke="#333" stroke-width=".9" fill="none"/></svg>
<svg style="left:683.800px;top:463.800px" width="4" height="5" viewBox="0 0 4 5"><path d="M.8.600L3 2.500.8 4.400" stroke="#333" stroke-width=".9" fill="none"/></svg>
<svg style="left:691px;top:464px" width="5" height="4" viewBox="0 0 5 4"><path d="M.6.800L2.500 2.800 4.400.8" stroke="#444" stroke-width=".8" fill="none"/></svg>
<div class="abs" style="left:697px;top:82px;width:1px;height:388px;background:#d0d0d0"></div>
<div class="abs" style="left:0;top:470px;width:890px;height:11px;background:#fff"></div>
<div class="t" style="left:12.500px;top:476.300px;font-size:5.550px">当前分析进度:分析完成</div>
<div class="t" style="left:160.500px;top:476.300px;font-size:5.550px">当前标定像素:300DPI</div>
<div class="t" style="left:305.500px;top:476.300px;font-size:5.550px">当前缩放比例:160%</div>
<div class="abs" style="left:698px;top:82px;width:192px;height:24px;background:#c9ced1"></div>
<svg style="left:698px;top:82px" width="192" height="24" viewBox="698 82 192 24"><path d="M698 105.500V90.500H757L761.500 105.500z" fill="#d6d6d6" stroke="#b4b9bc" stroke-width=".6"/><path d="M761.800 105.500L766 90.500H821L825.300 105.500z" fill="#d6d6d6" stroke="#b4b9bc" stroke-width=".6"/><path d="M826.300 106L831 90.500H885.600L890 106z" fill="#fff"/></svg>
<div class="tc" style="left:793px;top:98.200px;font-size:6.500px">粒型数据</div>
<div class="tc" style="left:857.500px;top:98.200px;font-size:6.500px">垩白数据</div>
<div class="abs" style="left:698px;top:105.500px;width:192px;height:25.500px;background:#f3f3f3"></div>
<div class="abs" style="left:698px;top:131px;width:192px;height:339px;background:#fff"></div>
<div class="btn" style="left:754.500px;top:112px;width:39px;height:14.500px;background:#d2d2d2;font-size:5.500px"><span style="margin-left:-2px">详细数据</span></div>
<div class="abs" style="left:754px;top:153.800px;width:23px;height:1.700px;background:#d9d9d9"></div>
<div class="abs" style="left:754px;top:189.900px;width:25px;height:1.700px;background:#d9d9d9"></div>
<div class="inp" style="left:794.6px;top:150.2px;width:41px;height:12px;border-color:#dcdcdc"></div>
<div class="t" style="left:797.2px;top:156.3px;font-size:6.300px">84</div>
<div class="abs" style="left:826.9px;top:152px;width:6.400px;height:8.400px;background:#e9e9e9;border:.5px solid #c4c4c4"></div>
<svg style="left:826.9px;top:152px" width="6.400" height="8.400" viewBox="0 0 6.400 8.400"><path d="M1.900 3.300L3.200 1.700 4.500 3.300zM1.900 5.100L3.200 6.700 4.500 5.100z" fill="#333"/></svg>
<div class="inp" style="left:794.6px;top:184px;width:41px;height:12px;border-color:#dcdcdc"></div>
<div class="t" style="left:797.2px;top:189.2px;font-size:6.300px">84</div>
<div class="abs" style="left:826.9px;top:185.8px;width:6.400px;height:8.400px;background:#e9e9e9;border:.5px solid #c4c4c4"></div>
<svg style="left:826.9px;top:185.8px" width="6.400" height="8.400" viewBox="0 0 6.400 8.400"><path d="M1.900 3.300L3.200 1.700 4.500 3.300zM1.900 5.100L3.200 6.700 4.500 5.100z" fill="#333"/></svg>
<div class="btn" style="left:841px;top:183px;width:36px;height:15.300px;background:#1a8fd6;color:#fff;font-size:6.300px">选择粒</div>
<div class="btn" style="left:761.200px;top:204.200px;width:39.800px;height:16px;background:#fff;border:1px solid #ffaaaa;color:#f25f5f;font-size:6.300px">手动移除</div>
<div class="btn" style="left:815px;top:205px;width:39px;height:15px;background:#d6ebf8;color:#3b9fe0;font-size:6.300px">手动减少</div>
<div class="inp" style="left:756.2px;top:238px;width:60.5px;height:16.5px"></div>
<div class="tc" style="left:783.45px;top:245.75px;font-size:7.6px">0.5</div>
<div class="t" style="left:819.700px;top:246px;font-size:7.300px">mm²</div>
<div class="inp" style="left:756.2px;top:262.2px;width:60.5px;height:16.5px"></div>
<div class="tc" style="left:783.45px;top:269.85px;font-size:7.6px">10</div>
<div class="cb" style="left:775.300px;top:290.100px"></div>
<div class="t" style="left:785.200px;top:293.200px;font-size:6.400px">平滑边缘</div>
<div class="btn" style="left:841px;top:285.300px;width:36px;height:15.300px;background:#1a8fd6;color:#fff;font-size:6.300px">上传向导</div>
<div class="inp" style="left:754px;top:322px;width:62.8px;height:15px"></div>
<div class="tc" style="left:785.4px;top:328.9px;font-size:7px">333</div>
<div class="t" style="left:819.300px;top:328.8px;font-size:6.3px">粒</div>
<div class="inp" style="left:754px;top:342.8px;width:62.8px;height:15px"></div>
<div class="tc" style="left:785.4px;top:349.7px;font-size:7px">221</div>
<div class="t" style="left:819.300px;top:349.6px;font-size:6.3px">粒</div>
<div class="inp" style="left:754px;top:363.6px;width:62.8px;height:15px"></div>
<div class="tc" style="left:785.4px;top:370.5px;font-size:7px">66.37</div>
<div class="t" style="left:819.300px;top:370.4px;font-size:7px">%</div>
<div class="inp" style="left:754px;top:384.4px;width:62.8px;height:15px"></div>
<div class="tc" style="left:785.4px;top:391.3px;font-size:7px">24.36</div>
<div class="t" style="left:819.300px;top:391.2px;font-size:7px">%</div>
<div class="inp" style="left:754px;top:405.2px;width:62.8px;height:15px"></div>
<div class="tc" style="left:785.4px;top:412.1px;font-size:7px">15.72</div>
<div class="t" style="left:819.300px;top:412px;font-size:7px">%</div>
<div class="inp" style="left:754px;top:426.5px;width:62.8px;height:15px"></div>
<div class="tc" style="left:785.4px;top:433.4px;font-size:7px">1</div>
<div class="t" style="left:819.300px;top:433.3px;font-size:6.3px">级</div>
<div class="t" style="left:710.300px;top:434px;font-size:6.500px">透明度等级</div>
<div class="abs" style="left:135px;top:58.500px;width:620px;height:362px;background:#fff;border:1px solid #bccad5;border-radius:5px;box-shadow:0 0 1.500px rgba(130,150,170,.5)"></div>
<div class="abs" style="left:140px;top:73px;width:481px;height:344px;background:#000;overflow:hidden"><svg style="left:0;top:0" width="481" height="344" viewBox="140 73 481 344"><defs><linearGradient id="rg" x1="0" y1="0" x2="0" y2="1"><stop offset="0" stop-color="#92858d"/><stop offset=".45" stop-color="#a3979f"/><stop offset="1" stop-color="#83767e"/></linearGradient><filter id="b2" x="-20%" y="-50%" width="140%" height="200%"><feGaussianBlur stdDeviation=".3"/></filter></defs><path d="M193.1 210.3L221.2 210.3L221.2 215.2L205.6 218.5L197.8 218.5L190.0 215.2z" fill="url(#rg)" stroke="url(#rg)" stroke-width="5.200" stroke-linejoin="round" filter="url(#b2)"/><path d="M233.2 210.3L255.6 210.3L259.4 218.0L258.4 218.5L228.4 218.5L227.4 218.0z" fill="url(#rg)" stroke="url(#rg)" stroke-width="5.200" stroke-linejoin="round" filter="url(#b2)"/><path d="M224.2 206.9V221.9" stroke="#8a0a8a" stroke-width=".6"/><path d="M271.8 210.3L291.9 210.3L296.6 218.0L293.5 218.5L268.1 218.5L265.6 218.0z" fill="url(#rg)" stroke="url(#rg)" stroke-width="5.200" stroke-linejoin="round" filter="url(#b2)"/><path d="M262.4 206.9V221.9" stroke="#8a0a8a" stroke-width=".6"/><path d="M303.7 210.3L333.5 210.3L334.4 215.2L328.7 218.5L308.5 218.5L302.8 215.2z" fill="url(#rg)" stroke="url(#rg)" stroke-width="5.200" stroke-linejoin="round" filter="url(#b2)"/><path d="M299.6 206.9V221.9" stroke="#8a0a8a" stroke-width=".6"/><path d="M344.3 210.3L368.5 210.3L371.6 218.0L370.1 218.5L342.1 218.5L340.6 218.0z" fill="url(#rg)" stroke="url(#rg)" stroke-width="5.200" stroke-linejoin="round" filter="url(#b2)"/><path d="M337.4 206.9V221.9" stroke="#8a0a8a" stroke-width=".6"/><path d="M384.7 210.3L408.8 210.3L412.2 218.0L410.5 218.5L377.8 218.5L377.8 218.0z" fill="url(#rg)" stroke="url(#rg)" stroke-width="5.200" stroke-linejoin="round" filter="url(#b2)"/><path d="M374.6 206.9V221.9" stroke="#8a0a8a" stroke-width=".6"/><path d="M419.8 210.3L443.0 210.3L445.7 215.2L443.0 218.5L422.5 218.5L418.4 215.2z" fill="url(#rg)" stroke="url(#rg)" stroke-width="5.200" stroke-linejoin="round" filter="url(#b2)"/><path d="M415.2 206.9V221.9" stroke="#8a0a8a" stroke-width=".6"/><path d="M453.4 210.3L479.2 210.3L481.6 215.2L478.0 218.5L456.4 218.5L451.9 215.2z" fill="url(#rg)" stroke="url(#rg)" stroke-width="5.200" stroke-linejoin="round" filter="url(#b2)"/><path d="M448.7 206.9V221.9" stroke="#8a0a8a" stroke-width=".6"/><path d="M490.1 210.3L513.8 210.3L516.7 215.2L513.8 218.5L492.1 218.5L487.8 215.2z" fill="url(#rg)" stroke="url(#rg)" stroke-width="5.200" stroke-linejoin="round" filter="url(#b2)"/><path d="M484.6 206.9V221.9" stroke="#8a0a8a" stroke-width=".6"/><path d="M525.3 210.3L544.9 210.3L547.3 218.0L546.1 218.5L525.3 218.5L522.9 215.2z" fill="url(#rg)" stroke="url(#rg)" stroke-width="5.200" stroke-linejoin="round" filter="url(#b2)"/><path d="M519.7 206.9V221.9" stroke="#8a0a8a" stroke-width=".6"/><path d="M194.7 271.5L219.6 271.5L221.2 276.5L219.6 279.9L191.6 279.9L190.0 279.3z" fill="url(#rg)" stroke="url(#rg)" stroke-width="5.200" stroke-linejoin="round" filter="url(#b2)"/><path d="M232.2 271.5L253.0 271.5L259.4 279.3L258.4 279.9L228.4 279.9L227.4 279.3z" fill="url(#rg)" stroke="url(#rg)" stroke-width="5.200" stroke-linejoin="round" filter="url(#b2)"/><path d="M224.2 268.1V283.3" stroke="#8a0a8a" stroke-width=".6"/><path d="M267.1 271.5L293.5 271.5L296.6 279.3L295.1 279.9L271.8 279.9L265.6 276.5z" fill="url(#rg)" stroke="url(#rg)" stroke-width="5.200" stroke-linejoin="round" filter="url(#b2)"/><path d="M262.4 268.1V283.3" stroke="#8a0a8a" stroke-width=".6"/><path d="M304.3 271.5L328.9 271.5L333.5 279.3L332.6 279.9L304.3 279.9L302.8 276.5z" fill="url(#rg)" stroke="url(#rg)" stroke-width="5.200" stroke-linejoin="round" filter="url(#b2)"/><path d="M299.6 268.1V283.3" stroke="#8a0a8a" stroke-width=".6"/><path d="M345.9 271.5L365.9 271.5L370.5 279.3L369.0 279.9L340.6 279.9L339.7 279.3z" fill="url(#rg)" stroke="url(#rg)" stroke-width="5.200" stroke-linejoin="round" filter="url(#b2)"/><path d="M336.5 268.1V283.3" stroke="#8a0a8a" stroke-width=".6"/><path d="M378.2 271.5L405.3 271.5L406.8 276.5L403.8 279.9L379.7 279.9L376.7 276.5z" fill="url(#rg)" stroke="url(#rg)" stroke-width="5.200" stroke-linejoin="round" filter="url(#b2)"/><path d="M373.5 268.1V283.3" stroke="#8a0a8a" stroke-width=".6"/><path d="M415.9 271.5L438.7 271.5L441.6 276.5L438.7 279.9L415.9 279.9L413.0 276.5z" fill="url(#rg)" stroke="url(#rg)" stroke-width="5.200" stroke-linejoin="round" filter="url(#b2)"/><path d="M409.8 268.1V283.3" stroke="#8a0a8a" stroke-width=".6"/><path d="M449.2 271.5L472.1 271.5L474.8 276.5L472.1 279.9L451.9 279.9L447.8 276.5z" fill="url(#rg)" stroke="url(#rg)" stroke-width="5.200" stroke-linejoin="round" filter="url(#b2)"/><path d="M444.6 268.1V283.3" stroke="#8a0a8a" stroke-width=".6"/><path d="M482.2 271.5L504.1 271.5L505.3 276.5L502.9 279.9L484.6 279.9L481.0 276.5z" fill="url(#rg)" stroke="url(#rg)" stroke-width="5.200" stroke-linejoin="round" filter="url(#b2)"/><path d="M477.8 268.1V283.3" stroke="#8a0a8a" stroke-width=".6"/><path d="M513.6 271.5L532.6 271.5L532.6 276.5L526.3 279.9L519.9 279.9L511.5 276.5z" fill="url(#rg)" stroke="url(#rg)" stroke-width="5.200" stroke-linejoin="round" filter="url(#b2)"/><path d="M508.3 268.1V283.3" stroke="#8a0a8a" stroke-width=".6"/><path d="M186.200 194.200H550.800" stroke="#00c8c8" stroke-width="1.800"/><path d="M186.200 253.700H536.200" stroke="#00c8c8" stroke-width="1.800"/><path d="M186.200 187.300V227.500M550.800 187.300V227.500M186.200 247V290M536.200 247V290" stroke="#ff22ff" stroke-width="1.500"/><text x="384.200" y="189" text-anchor="middle" font-size="7.800" font-weight="bold" fill="#ff1414" font-family="Liberation Sans,sans-serif">61.1mm</text><text x="376.300" y="248.700" text-anchor="middle" font-size="7.800" font-weight="bold" fill="#ff1414" font-family="Liberation Sans,sans-serif">58.3mm</text></svg></div>
<svg style="left:737.500px;top:62.600px" width="10" height="10" viewBox="0 0 10 10"><path d="M1.200 1.200l7.400 7.400M8.600 1.200L1.200 8.600" stroke="#111" stroke-width="1" fill="none"/></svg>
<div class="t" style="left:637.800px;top:84.400px;font-size:7.600px;font-weight:bold;color:#1a8fd6">对比</div>
<div class="tr" style="left:657.300px;top:112.4px;font-size:6.550px">米粒数</div>
<div class="tr" style="left:657.300px;top:131.4px;font-size:6.550px">特征</div>
<div class="tr" style="left:657.300px;top:151.1px;font-size:6.550px">背景</div>
<div class="tr" style="left:657.300px;top:173.9px;font-size:6.550px">纵向间隔</div>
<div class="tr" style="left:657.300px;top:196.3px;font-size:6.550px">排列方式</div>
<div class="inp" style="left:669.5px;top:104.3px;width:54.6px;height:13.2px"></div>
<div class="tc" style="left:695.8px;top:110.9px;font-size:6.8px">10</div>
<div class="t" style="left:730.500px;top:111.800px;font-size:6.700px">个</div>
<div class="combo" style="left:669.800px;top:124.3px;width:70.800px;height:14.4px"><i></i></div>
<div class="t" style="left:672.800px;top:131.2px;font-size:6.050px">长</div>
<div class="combo" style="left:669.800px;top:144.3px;width:70.800px;height:14.4px"><i></i></div>
<div class="t" style="left:672.800px;top:151.2px;font-size:6.050px">黑色背景</div>
<div class="inp" style="left:669.5px;top:166.3px;width:54.6px;height:13.3px"></div>
<div class="tc" style="left:695.8px;top:172.95px;font-size:6.8px">200</div>
<div class="t" style="left:727.500px;top:173.900px;font-size:6.550px;font-weight:500">像素</div>
<div class="combo" style="left:669.800px;top:188.4px;width:70.800px;height:13.8px"><i></i></div>
<div class="t" style="left:672.800px;top:195px;font-size:6.050px">横向排列</div>
<div class="cb" style="left:642.700px;top:215px"></div>
<div class="t" style="left:652.500px;top:217.200px;font-size:6.500px">显示单粒尺寸</div>
<div class="cb" style="left:696.300px;top:215px"></div>
<div class="t" style="left:705.800px;top:217.200px;font-size:6.550px">显示单粒编号</div>
<div class="btn" style="left:656.400px;top:232px;width:38.500px;height:19px;background:#fff;border:1px solid #ffaaaa;color:#f25f5f;font-size:6.300px">米粒删除</div>
<div class="btn" style="left:706px;top:232px;width:37.800px;height:19px;background:#1a8fd6;color:#fff;font-size:6.300px">保存图片</div>
<div class="t" style="left:626.300px;top:264.300px;font-size:6.500px;color:#8a8a8a">*左键点击目标米粒进行旋转，右键点击翻转</div>
<div class="wm" style="left:134px;top:25.8px">托普云农</div>
<div class="wm" style="left:34px;top:100px">托普云农</div>
<div class="wm" style="left:244px;top:142px">托普云农</div>
<div class="wm" style="left:135px;top:209px">托普云农</div>
<div class="wm" style="left:32px;top:279px">托普云农</div>
<div class="wm" style="left:283px;top:296px">托普云农</div>
<div class="wm" style="left:385.2px;top:222.2px">托普云农</div>
<div class="wm" style="left:494.7px;top:160px">托普云农</div>
<div class="wm" style="left:589.7px;top:97px">托普云农</div>
<div class="wm" style="left:370px;top:392.4px">托普云农</div>
<div class="wm" style="left:246.2px;top:473px">托普云农</div>
<div class="wm" style="left:690px;top:22.6px">托普云农</div>
<div class="wm" style="left:801px;top:139.5px">托普云农</div>
<div class="wm" style="left:692.6px;top:202px">托普云农</div>
<div class="wm" style="left:590.5px;top:277px">托普云农</div>
<div class="wm" style="left:839px;top:295px">托普云农</div>
<div class="wm" style="left:801px;top:466px">托普云农</div>
</body></html>
